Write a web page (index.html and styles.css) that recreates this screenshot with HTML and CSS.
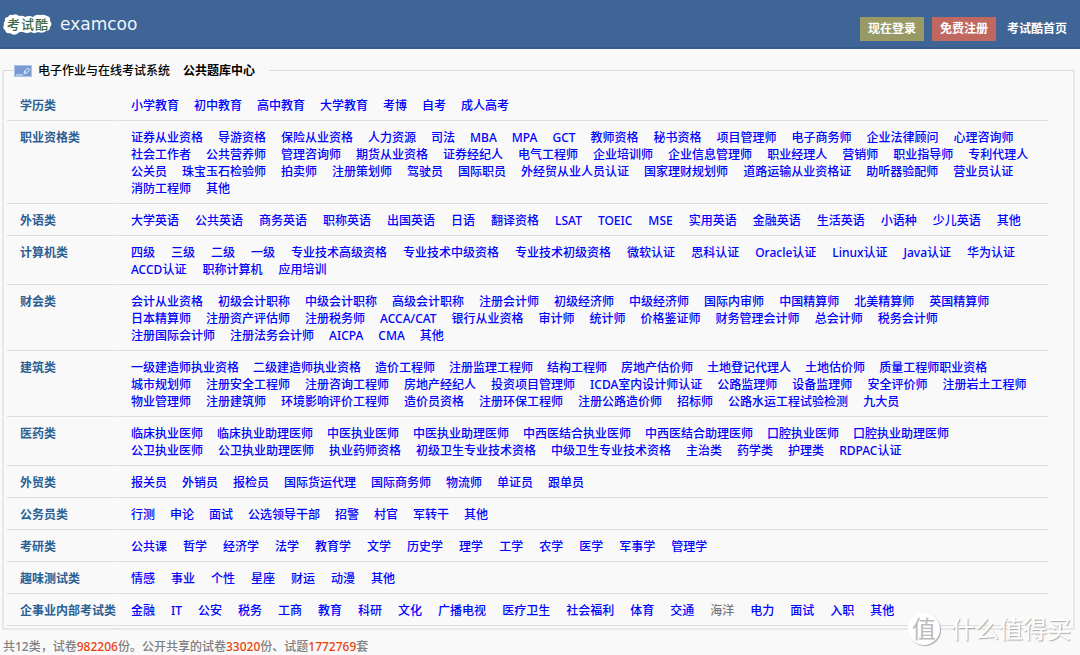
FILE: index.html
```html
<!DOCTYPE html>
<html lang="zh-CN">
<head>
<meta charset="utf-8">
<title>考试酷 examcoo</title>
<link rel="stylesheet" href="styles.css">
</head>
<body>
<header class="topbar">
  <a class="brand" href="#">
    <svg class="brand-logo" viewBox="0 0 49 24" aria-hidden="true">
      <path fill="#fff" d="M2 9Q1 5 5 5Q6 2 10 3Q13 1 16 4Q20 3 22 5Q26 3 30 5Q33 2 37 3Q41 2 44 4Q48 5 47 9Q50 12 47 15Q47 19 43 19Q40 22 35 20Q31 22 28 20Q24 22 20 20Q17 19 14 22Q10 24 7 21Q3 22 2 18Q-1 16 1 13Q0 11 2 9Z"/>
      <text class="logo-text" x="4 18 32" y="17">考试酷</text>
    </svg>
    <span class="brand-name">examcoo</span>
  </a>
  <nav class="topnav">
    <a class="btn btn-login" href="#">现在登录</a>
    <a class="btn btn-join" href="#">免费注册</a>
    <a class="home" href="#">考试酷首页</a>
  </nav>
</header>
<main>
<fieldset class="panel">
  <legend class="panel-title">
    <svg class="title-icon" viewBox="0 0 18 12" aria-hidden="true">
      <rect width="18" height="12" fill="#a9c2ea"/>
      <rect x="1" y="1" width="16" height="10" fill="#7b9bd0"/>
      <path d="M2 10h7M10 8.500l.8-2.500 3-3 1.900 1.700-3 3.200zM10.800 6l1.900 1.900" fill="none" stroke="#eef4ff" stroke-width=".9"/>
    </svg>
    <span>电子作业与在线考试系统</span>
    <b>公共题库中心</b>
  </legend>
  <table class="subjects">
    <tr><th scope="row">学历类</th><td>
      <div class="line"><a href="#">小学教育</a><a href="#">初中教育</a><a href="#">高中教育</a><a href="#">大学教育</a><a href="#">考博</a><a href="#">自考</a><a href="#">成人高考</a></div>
    </td></tr>
    <tr><th scope="row">职业资格类</th><td>
      <div class="line"><a href="#">证券从业资格</a><a href="#">导游资格</a><a href="#">保险从业资格</a><a href="#">人力资源</a><a href="#">司法</a><a href="#">MBA</a><a href="#">MPA</a><a href="#">GCT</a><a href="#">教师资格</a><a href="#">秘书资格</a><a href="#">项目管理师</a><a href="#">电子商务师</a><a href="#">企业法律顾问</a><a href="#">心理咨询师</a></div>
      <div class="line"><a href="#">社会工作者</a><a href="#">公共营养师</a><a href="#">管理咨询师</a><a href="#">期货从业资格</a><a href="#">证券经纪人</a><a href="#">电气工程师</a><a href="#">企业培训师</a><a href="#">企业信息管理师</a><a href="#">职业经理人</a><a href="#">营销师</a><a href="#">职业指导师</a><a href="#">专利代理人</a></div>
      <div class="line"><a href="#">公关员</a><a href="#">珠宝玉石检验师</a><a href="#">拍卖师</a><a href="#">注册策划师</a><a href="#">驾驶员</a><a href="#">国际职员</a><a href="#">外经贸从业人员认证</a><a href="#">国家理财规划师</a><a href="#">道路运输从业资格证</a><a href="#">助听器验配师</a><a href="#">营业员认证</a></div>
      <div class="line"><a href="#">消防工程师</a><a href="#">其他</a></div>
    </td></tr>
    <tr><th scope="row">外语类</th><td>
      <div class="line short"><a href="#">大学英语</a><a href="#">公共英语</a><a href="#">商务英语</a><a href="#">职称英语</a><a href="#">出国英语</a><a href="#">日语</a><a href="#">翻译资格</a><a href="#">LSAT</a><a href="#">TOEIC</a><a href="#">MSE</a><a href="#">实用英语</a><a href="#">金融英语</a><a href="#">生活英语</a><a href="#">小语种</a><a href="#">少儿英语</a><a href="#">其他</a></div>
    </td></tr>
    <tr><th scope="row">计算机类</th><td>
      <div class="line short"><a href="#">四级</a><a href="#">三级</a><a href="#">二级</a><a href="#">一级</a><a href="#">专业技术高级资格</a><a href="#">专业技术中级资格</a><a href="#">专业技术初级资格</a><a href="#">微软认证</a><a href="#">思科认证</a><a href="#">Oracle认证</a><a href="#">Linux认证</a><a href="#">Java认证</a><a href="#">华为认证</a></div>
      <div class="line short"><a href="#">ACCD认证</a><a href="#">职称计算机</a><a href="#">应用培训</a></div>
    </td></tr>
    <tr><th scope="row">财会类</th><td>
      <div class="line"><a href="#">会计从业资格</a><a href="#">初级会计职称</a><a href="#">中级会计职称</a><a href="#">高级会计职称</a><a href="#">注册会计师</a><a href="#">初级经济师</a><a href="#">中级经济师</a><a href="#">国际内审师</a><a href="#">中国精算师</a><a href="#">北美精算师</a><a href="#">英国精算师</a></div>
      <div class="line"><a href="#">日本精算师</a><a href="#">注册资产评估师</a><a href="#">注册税务师</a><a href="#">ACCA/CAT</a><a href="#">银行从业资格</a><a href="#">审计师</a><a href="#">统计师</a><a href="#">价格鉴证师</a><a href="#">财务管理会计师</a><a href="#">总会计师</a><a href="#">税务会计师</a></div>
      <div class="line"><a href="#">注册国际会计师</a><a href="#">注册法务会计师</a><a href="#">AICPA</a><a href="#">CMA</a><a href="#">其他</a></div>
    </td></tr>
    <tr><th scope="row">建筑类</th><td>
      <div class="line long"><a href="#">一级建造师执业资格</a><a href="#">二级建造师执业资格</a><a href="#">造价工程师</a><a href="#">注册监理工程师</a><a href="#">结构工程师</a><a href="#">房地产估价师</a><a href="#">土地登记代理人</a><a href="#">土地估价师</a><a href="#">质量工程师职业资格</a></div>
      <div class="line"><a href="#">城市规划师</a><a href="#">注册安全工程师</a><a href="#">注册咨询工程师</a><a href="#">房地产经纪人</a><a href="#">投资项目管理师</a><a href="#">ICDA室内设计师认证</a><a href="#">公路监理师</a><a href="#">设备监理师</a><a href="#">安全评价师</a><a href="#">注册岩土工程师</a></div>
      <div class="line"><a href="#">物业管理师</a><a href="#">注册建筑师</a><a href="#">环境影响评价工程师</a><a href="#">造价员资格</a><a href="#">注册环保工程师</a><a href="#">注册公路造价师</a><a href="#">招标师</a><a href="#">公路水运工程试验检测</a><a href="#">九大员</a></div>
    </td></tr>
    <tr><th scope="row">医药类</th><td>
      <div class="line long"><a href="#">临床执业医师</a><a href="#">临床执业助理医师</a><a href="#">中医执业医师</a><a href="#">中医执业助理医师</a><a href="#">中西医结合执业医师</a><a href="#">中西医结合助理医师</a><a href="#">口腔执业医师</a><a href="#">口腔执业助理医师</a></div>
      <div class="line"><a href="#">公卫执业医师</a><a href="#">公卫执业助理医师</a><a href="#">执业药师资格</a><a href="#">初级卫生专业技术资格</a><a href="#">中级卫生专业技术资格</a><a href="#">主治类</a><a href="#">药学类</a><a href="#">护理类</a><a href="#">RDPAC认证</a></div>
    </td></tr>
    <tr><th scope="row">外贸类</th><td>
      <div class="line"><a href="#">报关员</a><a href="#">外销员</a><a href="#">报检员</a><a href="#">国际货运代理</a><a href="#">国际商务师</a><a href="#">物流师</a><a href="#">单证员</a><a href="#">跟单员</a></div>
    </td></tr>
    <tr><th scope="row">公务员类</th><td>
      <div class="line"><a href="#">行测</a><a href="#">申论</a><a href="#">面试</a><a href="#">公选领导干部</a><a href="#">招警</a><a href="#">村官</a><a href="#">军转干</a><a href="#">其他</a></div>
    </td></tr>
    <tr><th scope="row">考研类</th><td>
      <div class="line short"><a href="#">公共课</a><a href="#">哲学</a><a href="#">经济学</a><a href="#">法学</a><a href="#">教育学</a><a href="#">文学</a><a href="#">历史学</a><a href="#">理学</a><a href="#">工学</a><a href="#">农学</a><a href="#">医学</a><a href="#">军事学</a><a href="#">管理学</a></div>
    </td></tr>
    <tr><th scope="row">趣味测试类</th><td>
      <div class="line short"><a href="#">情感</a><a href="#">事业</a><a href="#">个性</a><a href="#">星座</a><a href="#">财运</a><a href="#">动漫</a><a href="#">其他</a></div>
    </td></tr>
    <tr><th scope="row">企事业内部考试类</th><td>
      <div class="line short"><a href="#">金融</a><a href="#">IT</a><a href="#">公安</a><a href="#">税务</a><a href="#">工商</a><a href="#">教育</a><a href="#">科研</a><a href="#">文化</a><a href="#">广播电视</a><a href="#">医疗卫生</a><a href="#">社会福利</a><a href="#">体育</a><a href="#">交通</a><a class="visited" href="#">海洋</a><a href="#">电力</a><a href="#">面试</a><a href="#">入职</a><a href="#">其他</a></div>
    </td></tr>
  </table>
</fieldset>
</main>
<footer class="totals">共12类，试卷<strong>982206</strong>份。公开共享的试卷<strong>33020</strong>份、试题<strong>1772769</strong>套</footer>
<div class="watermark"><span class="seal">值</span><span>什么值得买</span></div>
</body>
</html>
```
FILE: styles.css
```css
body {
  margin: 0;
  min-height: 100vh;
  position: relative;
  background: #f9f9f9;
  color: #000;
  font: 500 12px/17px "Noto Sans", "Noto Sans CJK SC", sans-serif;
}

a {
  color: #00f;
  text-decoration: none;
}

.topbar {
  display: flex;
  justify-content: space-between;
  box-sizing: border-box;
  height: 49px;
  padding: 0 13px 0 3px;
  background: #3f6496;
  border-bottom: 2px solid #375a8c;
}

.brand {
  display: flex;
  align-items: center;
  gap: 8px;
  color: #f0f4fa;
}

.brand-logo {
  width: 49px;
  height: 24px;
}

.logo-text {
  fill: #3f6a48;
  font: 500 13px "Noto Sans CJK SC", sans-serif;
}

.brand-name {
  font: 17px/24px "DejaVu Sans", sans-serif;
}

.topnav {
  display: flex;
  align-items: center;
  gap: 8px;
  padding-top: 10px;
  font-weight: 700;
}

.btn {
  padding: 0 8px;
  line-height: 24px;
  color: #fff;
}

.btn-login {
  background: #999966;
}

.btn-join {
  background: #c06860;
}

.home {
  padding-left: 3px;
  color: #fff;
}

.panel {
  margin: 12px 5px 0 2px;
  padding: 10px 24px 2px 2px;
  border: 2px solid #e8e8e8;
  border-top: 1px solid #dcdcdc;
}

.panel-title {
  display: flex;
  align-items: center;
  margin-left: 8px;
  padding: 1px 14px 0 0;
}

.title-icon {
  width: 18px;
  height: 12px;
  margin-right: 6px;
}

.panel-title b {
  margin-left: 13px;
}

.subjects {
  width: 100%;
  border-collapse: separate;
  border-spacing: 1px 0;
}

.subjects th,
.subjects td {
  padding: 8px 0 6px 13px;
  border-bottom: 1px solid #dedede;
  vertical-align: top;
  text-align: left;
}

.subjects th {
  width: 97px;
  color: #2c5f93;
  font-weight: 700;
  white-space: nowrap;
}

.line {
  display: flex;
  gap: 15px;
  white-space: nowrap;
}

.line.short {
  gap: 16px;
}

.line.long {
  gap: 14px;
}

.line .visited {
  color: #777;
}

.totals {
  padding: 8px 3px 0;
  color: #808080;
}

.totals strong {
  color: #e8400c;
  font-weight: 500;
}

.watermark {
  position: absolute;
  right: 9px;
  bottom: 10px;
  display: flex;
  align-items: center;
  gap: 11px;
  color: #fff;
  font-size: 24px;
  line-height: 32px;
  font-weight: 400;
  text-shadow: 1px 1px 1px #aaa;
  pointer-events: none;
}

.seal {
  width: 32px;
  border-radius: 50%;
  background: #fff;
  box-shadow: 1px 1px 1px #aaa;
  color: #bbb;
  text-align: center;
  text-shadow: none;
}
```
